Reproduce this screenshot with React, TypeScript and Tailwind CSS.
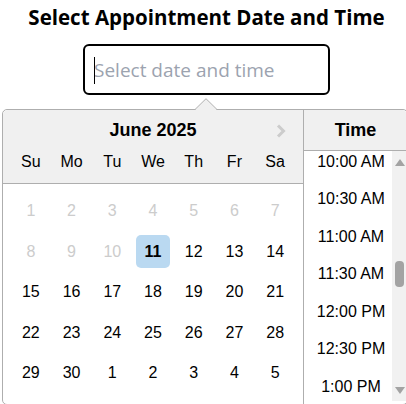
import React from "react";

type Day = { n: number; muted?: boolean; selected?: boolean };

const weeks: Day[][] = [
  [1, 2, 3, 4, 5, 6, 7].map((n) => ({ n, muted: true })),
  [
    { n: 8, muted: true },
    { n: 9, muted: true },
    { n: 10, muted: true },
    { n: 11, selected: true },
    { n: 12 },
    { n: 13 },
    { n: 14 },
  ],
  [15, 16, 17, 18, 19, 20, 21].map((n) => ({ n })),
  [22, 23, 24, 25, 26, 27, 28].map((n) => ({ n })),
  [29, 30, 1, 2, 3, 4, 5].map((n) => ({ n })),
];

const dayNames = ["Su", "Mo", "Tu", "We", "Th", "Fr", "Sa"];

const times = Array.from({ length: 48 }, (_, i) => {
  const h = Math.floor(i / 2);
  const m = i % 2 ? "30" : "00";
  const h12 = h % 12 || 12;
  return `${h12}:${m} ${h < 12 ? "AM" : "PM"}`;
});

// list is scrolled down to 10:00 AM, scrollbar drawn by hand
const TimeList: React.FC = () => (
  <div className="flex h-[250px]">
    <div className="w-[88px] overflow-hidden pl-[6px]">
      <ul className="-mt-[758px]">
        {times.map((t) => (
          <li
            key={t}
            className="h-[37.5px] flex items-center justify-center text-[16px] text-black"
          >
            {t}
          </li>
        ))}
      </ul>
    </div>
    <div className="w-[15px] flex flex-col bg-[#f1f1f1]">
      <div className="h-[20px] flex justify-center pt-[8px]">
        <svg width="10" height="7" viewBox="0 0 10 7">
          <polygon points="5,0 10,7 0,7" fill="#a3a3a3" />
        </svg>
      </div>
      <div className="flex-1 pt-[90px]">
        <div className="mx-auto w-[9px] h-[26px] rounded-[4px] bg-[#a3a3a3]" />
      </div>
      <div className="h-[20px] flex justify-center pt-[6px]">
        <svg width="10" height="7" viewBox="0 0 10 7">
          <polygon points="0,0 10,0 5,7" fill="#a3a3a3" />
        </svg>
      </div>
    </div>
  </div>
);

export default function App() {
  return (
    <div className="relative w-[406px] h-[404px] overflow-hidden bg-white">
      <div className="flex flex-col items-center pl-[7px] pt-[3px] font-['Open_Sans',sans-serif]">
        <h2 className="text-[20.5px] font-bold text-black leading-[29px]">
          Select Appointment Date and Time
        </h2>
        <div className="relative mt-[12px]">
          <input
            placeholder="Select date and time"
            className="w-[247px] h-[51px] border-2 border-black rounded-[6px] pl-[9px] text-[19px] placeholder:text-[#9ca3af] outline-none"
          />
          <div className="absolute left-[11px] top-[13px] w-px h-[27px] bg-black" />
        </div>
      </div>

      <div className="absolute left-[2px] top-[109px] flex border border-[#aeaeae] rounded-[5px] bg-white font-['Liberation_Sans',Arial,sans-serif]">
        <div className="w-[300px]">
          <div className="relative bg-[#f0f0f0] border-b border-[#aeaeae] rounded-tl-[5px] pb-[11px]">
            <div className="h-[40px] flex items-center justify-center text-[18px] font-bold text-black">
              June 2025
            </div>
            <svg
              className="absolute right-[17px] top-[14px]"
              width="10"
              height="14"
              viewBox="0 0 10 14"
            >
              <path
                d="M2 1.5 L7.5 7 L2 12.5"
                fill="none"
                stroke="#cccccc"
                strokeWidth="3"
              />
            </svg>
            <div className="w-[285px] mx-auto grid grid-cols-7 h-[22px] items-center text-[16px] text-black">
              {dayNames.map((d) => (
                <div key={d} className="text-center">
                  {d}
                </div>
              ))}
            </div>
          </div>
          <div className="w-[285px] mx-auto pt-[7px] pb-[10px]">
            {weeks.map((w, i) => (
              <div key={i} className="grid grid-cols-7 h-[40.5px] items-center">
                {w.map((d, j) => (
                  <div key={j} className="flex justify-center">
                    <span
                      className={
                        d.selected
                          ? "w-[34px] h-[33px] flex items-center justify-center rounded-[5px] bg-[#bad9f1] font-bold text-black text-[16px]"
                          : d.muted
                          ? "text-[16px] text-[#cccccc]"
                          : "text-[16px] text-black"
                      }
                    >
                      {d.n}
                    </span>
                  </div>
                ))}
              </div>
            ))}
          </div>
        </div>
        <div className="w-[104px] border-l border-[#aeaeae]">
          <div className="h-[41px] bg-[#f0f0f0] border-b border-[#aeaeae] rounded-tr-[5px] flex items-center justify-center text-[18px] font-bold text-black">
            Time
          </div>
          <TimeList />
        </div>
      </div>

      <svg
        className="absolute left-[195px] top-[98px]"
        width="22"
        height="13"
        viewBox="0 0 22 13"
      >
        <polygon points="0,12 11,0.7 22,12 22,13 0,13" fill="#f0f0f0" />
        <polyline points="0,11.5 11,0.7 22,11.5" fill="none" stroke="#aeaeae" strokeWidth="1" />
      </svg>
    </div>
  );
}
